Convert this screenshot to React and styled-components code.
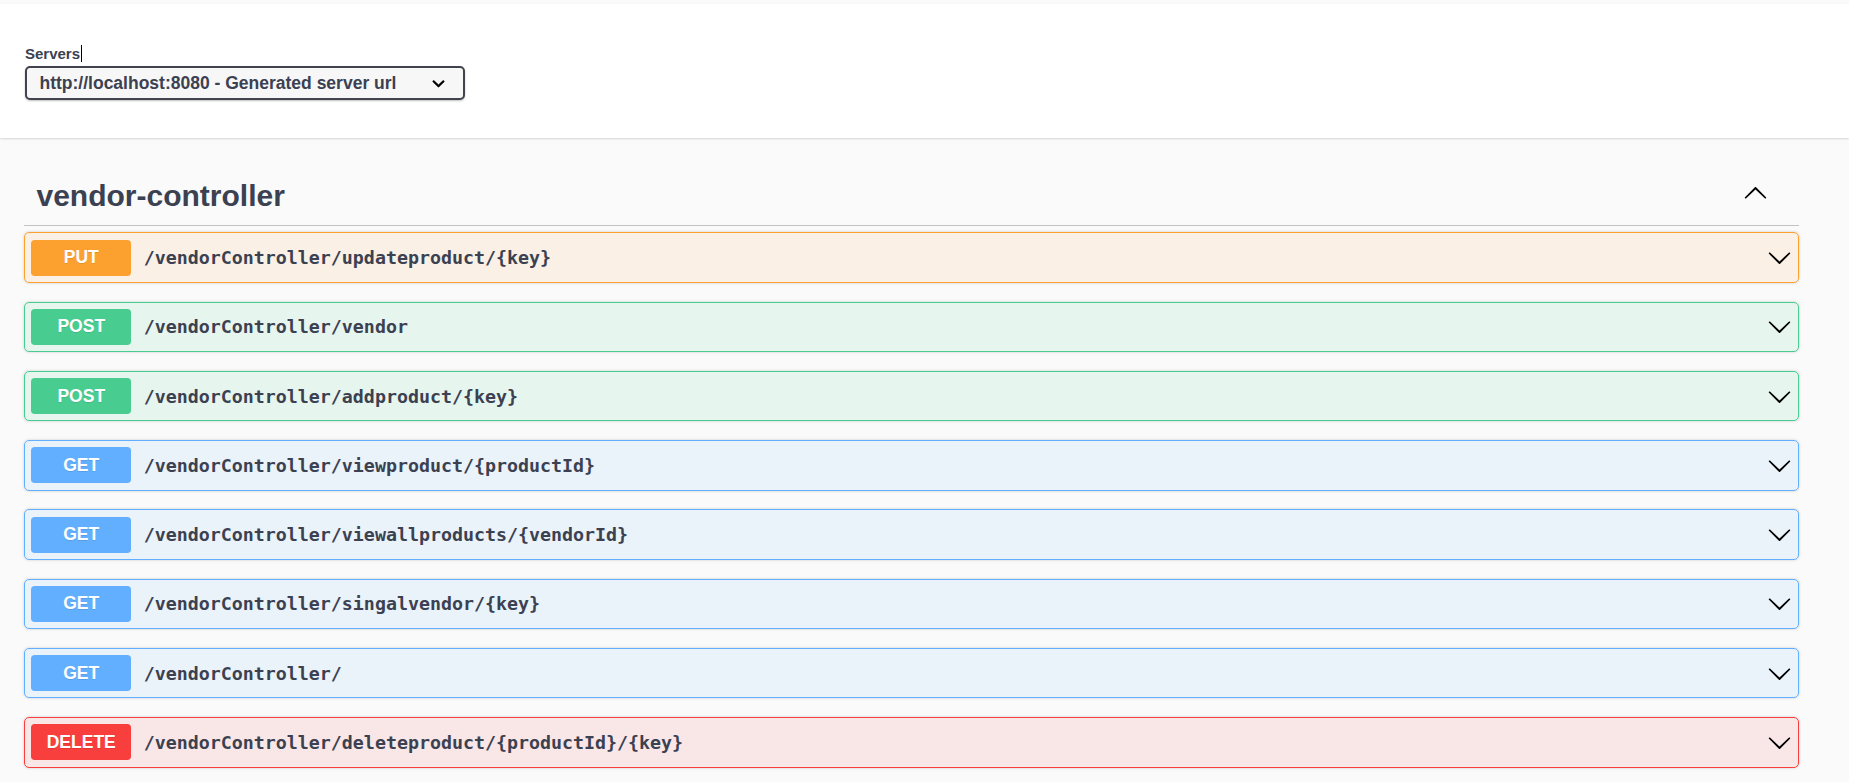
import React from 'react'
import styled, { createGlobalStyle } from 'styled-components'

const METHOD_COLORS = {
  PUT: '252, 161, 48',
  POST: '73, 204, 144',
  GET: '97, 175, 254',
  DELETE: '249, 62, 62',
}

const operations = [
  { method: 'PUT', path: '/vendorController/updateproduct/{key}' },
  { method: 'POST', path: '/vendorController/vendor' },
  { method: 'POST', path: '/vendorController/addproduct/{key}' },
  { method: 'GET', path: '/vendorController/viewproduct/{productId}' },
  { method: 'GET', path: '/vendorController/viewallproducts/{vendorId}' },
  { method: 'GET', path: '/vendorController/singalvendor/{key}' },
  { method: 'GET', path: '/vendorController/' },
  { method: 'DELETE', path: '/vendorController/deleteproduct/{productId}/{key}' },
]

const GlobalStyle = createGlobalStyle`
  body {
    margin: 0;
    background: #fafafa;
    font-family: "Liberation Sans", Arial, sans-serif;
    color: #3b4151;
  }
`

const Page = styled.div`
  padding-top: 4px;
  min-height: 778px;
`

const SchemeContainer = styled.section`
  background: #fff;
  box-shadow: 0 1px 2px 0 rgba(0, 0, 0, 0.15);
  padding: 41px 25px 38px;
`

const ServersLabel = styled.div`
  font-size: 15px;
  font-weight: 700;
  line-height: 17px;
  margin-bottom: 4px;
  display: flex;
  align-items: center;
`

const Caret = styled.span`
  display: inline-block;
  width: 1px;
  height: 17px;
  background: #000;
  margin-left: 1px;
`

const Select = styled.div`
  box-sizing: border-box;
  width: 440px;
  height: 34px;
  border: 2.5px solid #41444e;
  border-radius: 5px;
  background: #f7f7f7;
  box-shadow: 0 1px 2px 0 rgba(0, 0, 0, 0.25);
  display: flex;
  align-items: center;
  justify-content: space-between;
  padding: 0 12.5px;
  font-size: 17.5px;
  font-weight: 700;
  color: #3b4151;
`

const Section = styled.section`
  margin-top: 28px;
  padding: 0 50px 0 24px;
`

const TagHeading = styled.h3`
  margin: 0 0 6.25px;
  padding: 12.5px 25px 12.5px 12.5px;
  border-bottom: 1px solid rgba(59, 65, 81, 0.3);
  display: flex;
  align-items: center;
  justify-content: space-between;
  font-size: 30px;
  font-weight: 700;
  line-height: normal;
  color: #3b4151;
`

const ToggleButton = styled.span`
  display: flex;
  padding-right: 6px;
  margin-top: -5px;
`

const OpBlock = styled.div`
  box-sizing: border-box;
  height: 50.5px;
  margin-bottom: 18.75px;
  border: 1px solid rgb(${p => p.$rgb});
  border-radius: 5px;
  background: rgba(${p => p.$rgb}, 0.1);
  box-shadow: 0 0 3px rgba(0, 0, 0, 0.19);
  display: flex;
  align-items: center;
  padding: 0 6.25px;
`

const MethodBadge = styled.span`
  width: 100px;
  height: 36px;
  flex: none;
  border-radius: 3.75px;
  background: rgb(${p => p.$rgb});
  color: #fff;
  font-size: 17.5px;
  font-weight: 700;
  text-shadow: 0 1px 0 rgba(0, 0, 0, 0.1);
  display: flex;
  align-items: center;
  justify-content: center;
`

const OpPath = styled.span`
  flex: 1;
  padding: 0 12.5px;
  font-family: "DejaVu Sans Mono", "Liberation Mono", monospace;
  font-size: 18.3px;
  font-weight: 700;
  color: #3b4151;
`

const Arrow = styled.svg`
  width: 25px;
  height: 25px;
  flex: none;
  transform: ${p => (p.$up ? 'scaleY(-1)' : 'none')};
`

const ArrowIcon = ({ up }) => (
  <Arrow $up={up} viewBox="0 0 20 20">
    <path
      fill="#000"
      d="M17.418 6.109c.272-.268.709-.268.979 0s.271.701 0 .969l-7.908 7.83c-.27.268-.707.268-.979 0l-7.908-7.83c-.27-.268-.27-.701 0-.969.271-.268.709-.268.979 0L10 13.25l7.418-7.141z"
    />
  </Arrow>
)

const SelectArrow = styled.svg`
  width: 25px;
  height: 25px;
  flex: none;
`

const Operation = ({ method, path }) => {
  const rgb = METHOD_COLORS[method]
  return (
    <OpBlock $rgb={rgb}>
      <MethodBadge $rgb={rgb}>{method}</MethodBadge>
      <OpPath>{path}</OpPath>
      <ArrowIcon />
    </OpBlock>
  )
}

export default function App() {
  return (
    <Page>
      <GlobalStyle />
      <SchemeContainer>
        <ServersLabel>
          Servers<Caret />
        </ServersLabel>
        <Select>
          <span>http://localhost:8080 - Generated server url</span>
          <SelectArrow viewBox="0 0 20 20">
            <path
              fill="#000"
              stroke="#000"
              strokeWidth="0.4"
              d="M13.418 7.859a.695.695 0 0 1 .978 0 .68.68 0 0 1 0 .969l-3.908 3.83a.697.697 0 0 1-.979 0l-3.908-3.83a.68.68 0 0 1 0-.969.695.695 0 0 1 .978 0L10 11z"
            />
          </SelectArrow>
        </Select>
      </SchemeContainer>

      <Section>
        <TagHeading>
          <span>vendor-controller</span>
          <ToggleButton>
            <ArrowIcon up />
          </ToggleButton>
        </TagHeading>
        {operations.map((op, i) => (
          <Operation key={i} method={op.method} path={op.path} />
        ))}
      </Section>
    </Page>
  )
}
